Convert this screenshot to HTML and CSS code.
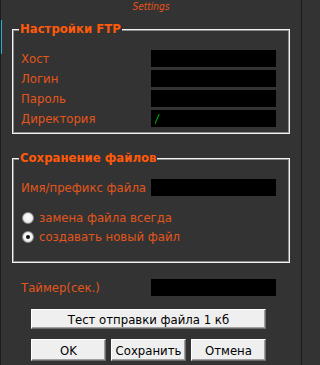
FILE: index.html
```html
<!DOCTYPE html>
<html lang="ru">
<head>
<meta charset="utf-8">
<title>Settings</title>
<link rel="stylesheet" href="styles.css">
</head>
<body>
<div class="window">
  <div class="caption">Settings</div>

  <fieldset class="group group-ftp">
    <legend class="group-title">Настройки FTP</legend>
    <div class="row"><span class="label">Хост</span><input class="field" type="text" value=""></div>
    <div class="row"><span class="label">Логин</span><input class="field" type="text" value=""></div>
    <div class="row"><span class="label">Пароль</span><input class="field" type="password" value=""></div>
    <div class="row"><span class="label">Директория</span><input class="field" type="text" value="/"></div>
  </fieldset>

  <fieldset class="group group-save">
    <legend class="group-title">Сохранение файлов</legend>
    <div class="row"><span class="label">Имя/префикс файла</span><input class="field" type="text" value=""></div>
    <div class="radios">
      <label class="radio-row"><input class="radio" type="radio" name="mode"><span>замена файла всегда</span></label>
      <label class="radio-row"><input class="radio" type="radio" name="mode" checked><span>создавать новый файл</span></label>
    </div>
  </fieldset>

  <div class="row timer-row"><span class="label">Таймер(сек.)</span><input class="field" type="text" value=""></div>

  <div class="actions">
    <button class="btn btn-wide" type="button">Тест отправки файла 1 кб</button>
    <div class="btn-row">
      <button class="btn" type="button">OK</button>
      <button class="btn" type="button">Сохранить</button>
      <button class="btn" type="button">Отмена</button>
    </div>
  </div>
</div>
</body>
</html>
```

FILE: styles.css
```css
html, body {
  margin: 0;
  padding: 0;
  background: #333333;
}

.window {
  box-sizing: border-box;
  width: 302px;
  height: 365px;
  overflow: hidden;
  border-left: 1px solid #1c1c1c;
  border-right: 1px solid #1c1c1c;
  background: #333333 linear-gradient(#1ab8d6, #1ab8d6) no-repeat 0 20px / 1px 34px;
  font-family: "DejaVu Sans Condensed", "DejaVu Sans", sans-serif;
  font-size: 13px;
  color: #e2561c;
}

.caption {
  height: 14px;
  line-height: 14px;
  text-align: center;
  font-size: 10px;
  font-style: italic;
  color: #e8531a;
}

.group {
  box-sizing: border-box;
  width: 278px;
  margin: 8px 0 0 11px;
  padding: 14px 12px 6px 8px;
  border: 1px solid #f2f2f2;
  box-shadow: inset 0 0 0 1px #8a8a8a;
  min-width: 0;
}

.group-save {
  margin-top: 17px;
  padding-bottom: 17px;
}

.group-title {
  padding: 0 1px;
  margin-left: -2px;
  background: #333333;
  font-weight: bold;
  font-size: 13px;
  line-height: 14px;
  color: #ff5a0a;
}

.row {
  display: flex;
  align-items: center;
  height: 17px;
}

.row + .row {
  margin-top: 3px;
}

.label {
  width: 130px;
  flex: none;
  line-height: 17px;
  white-space: nowrap;
}

.field {
  box-sizing: border-box;
  width: 125px;
  height: 17px;
  margin: 0;
  padding: 0 4px;
  border: none;
  outline: none;
  background: #000000;
  color: #00c400;
  font-family: inherit;
  font-size: 12px;
  font-style: italic;
}

.radios {
  margin-top: 13px;
  display: flex;
  flex-direction: column;
  gap: 2px;
}

.radio-row {
  display: flex;
  align-items: center;
  height: 17px;
  gap: 5px;
}

.radio {
  appearance: none;
  -webkit-appearance: none;
  box-sizing: border-box;
  width: 12px;
  height: 12px;
  margin: 0 0 0 1px;
  border: 1px solid #8d8d8d;
  border-radius: 50%;
  background: radial-gradient(circle at 50% 45%, #ffffff 0%, #f4f4f4 45%, #d6d6d6 100%);
  display: grid;
  place-items: center;
}

.radio:checked::after {
  content: "";
  width: 4px;
  height: 4px;
  border-radius: 50%;
  background: #111111;
}

.timer-row {
  margin-top: 16px;
  padding-left: 20px;
}

.actions {
  margin: 13px 0 0 30px;
  width: 235px;
  display: flex;
  flex-direction: column;
  gap: 10px;
}

.btn {
  box-sizing: border-box;
  height: 20px;
  margin: 0;
  padding: 0;
  background: #efefef;
  border: 1px solid;
  border-color: #ffffff #6b6b6b #6b6b6b #ffffff;
  box-shadow: inset -1px -1px 0 #a0a0a0;
  color: #000000;
  font-family: "DejaVu Sans Condensed", "DejaVu Sans", sans-serif;
  font-size: 13px;
  line-height: 17px;
}

.btn-wide {
  width: 235px;
}

.btn-row {
  display: flex;
  gap: 5px;
}

.btn-row .btn {
  width: 75px;
  height: 22px;
}
```
